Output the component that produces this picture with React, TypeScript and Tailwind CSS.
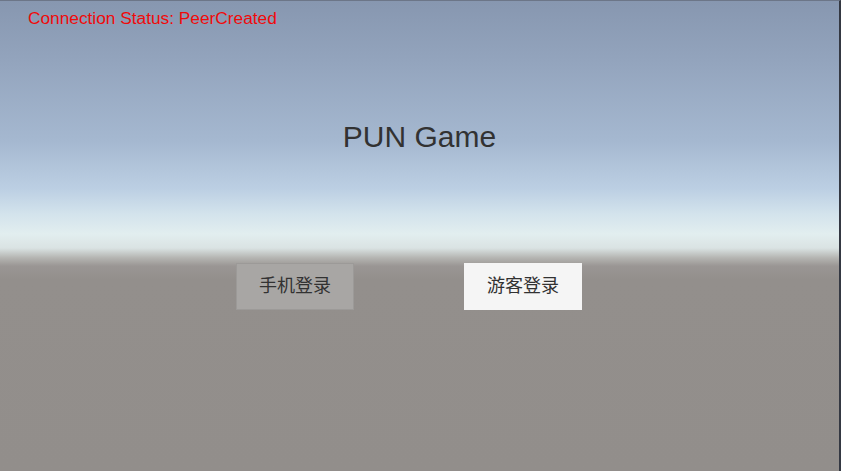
export default function App() {
  return (
    <div
      className="w-[841px] h-[471px] overflow-hidden flex flex-col border-t border-t-[#6c7688] border-r-2 border-r-[#343842]"
      style={{
        background:
          'linear-gradient(to bottom, #8797b0 0px, #93a4bd 60px, #a5b8d0 140px, #bccfe3 188px, #d3e3ec 213px, #e2eeef 233px, #dae3e3 247px, #b4b4b1 257px, #9a9694 265px, #938f8c 278px, #928e8b 471px)',
        fontFamily: '"Liberation Sans", Arial, "Noto Sans CJK SC", sans-serif',
      }}
    >
      <p className="pl-[28px] pt-[7px] text-[17.3px] leading-[20px] text-[#f00a0a]">
        Connection Status: PeerCreated
      </p>

      <h1 className="mt-[92px] text-center text-[30px] leading-[34px] text-[#323232]">PUN Game</h1>

      <div className="mt-[109px] flex justify-center gap-[110px] pr-[21px]">
        <button className="w-[118px] h-[47px] bg-[#a8a6a4] border border-[#9c9a98] text-[18px] text-[#323232]">
          手机登录
        </button>
        <button className="w-[118px] h-[47px] bg-[#f5f5f5] text-[18px] text-[#323232]">
          游客登录
        </button>
      </div>
    </div>
  )
}
